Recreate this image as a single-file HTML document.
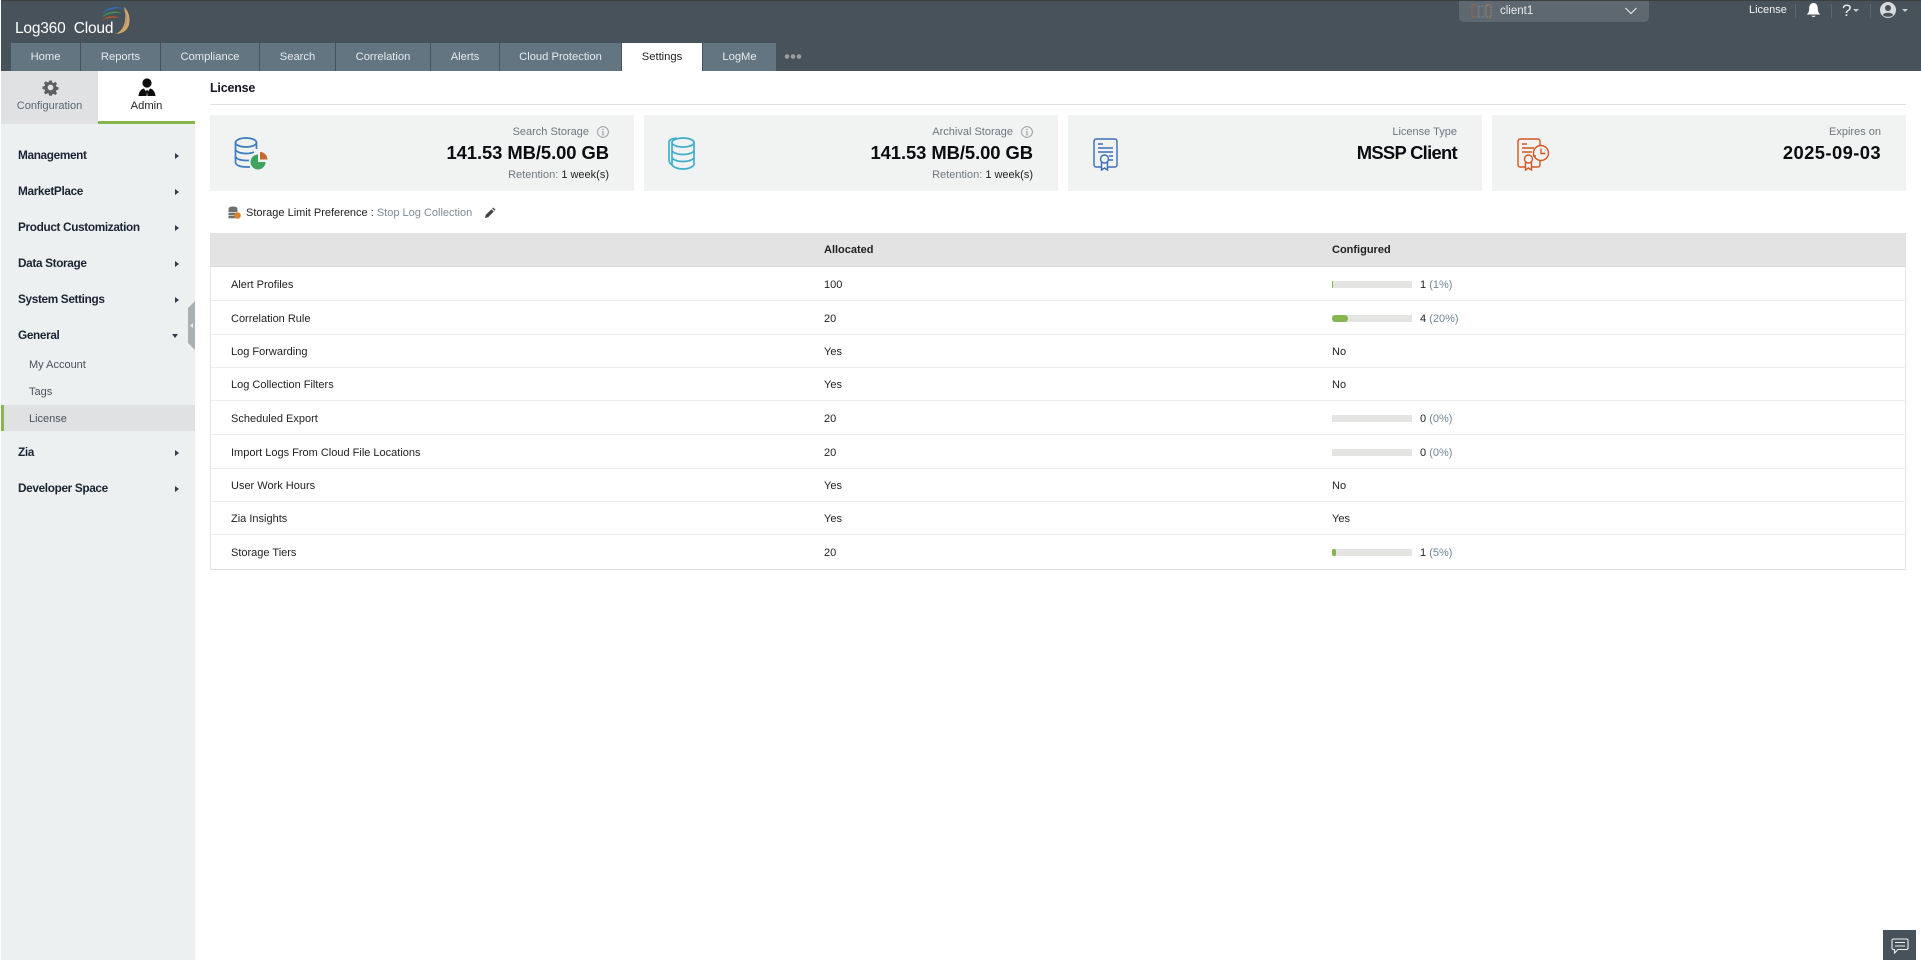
<!DOCTYPE html>
<html><head><meta charset="utf-8"><title>License</title>
<style>
*{box-sizing:border-box}
html,body{margin:0;padding:0;width:1921px;height:960px;overflow:hidden;background:#fff;font-family:"Liberation Sans",sans-serif;font-size:11px;color:#222}
.a{position:absolute;white-space:nowrap;line-height:14px}
#hd{position:absolute;left:0;top:0;width:1921px;height:71px;background:#47525a;border-top:1px solid #3a3f42}
.tab{position:absolute;top:43px;height:28px;background:#647582;color:#e6ebee;text-align:center;line-height:28px;font-size:11.2px}
.tab.on{background:#fff;color:#222}
.mt{position:absolute;left:18px;font-weight:bold;font-size:11.8px;letter-spacing:-.35px;color:#1b2433;line-height:14px;white-space:nowrap}
.ar{position:absolute;left:175px;width:0;height:0;border-left:4px solid #3b3650;border-top:3.5px solid transparent;border-bottom:3.5px solid transparent}
.st{position:absolute;left:29px;color:#4a5258;line-height:14px;font-size:11px}
.card{position:absolute;top:115px;height:76px;background:#f1f3f3}
.lb{position:absolute;right:25px;color:#6f777c;font-size:11px;line-height:14px;white-space:nowrap}
.v{position:absolute;right:25px;top:27px;font-weight:bold;font-size:18.4px;color:#0b0b10;line-height:22px;white-space:nowrap}
.ret{position:absolute;right:25px;top:53px;color:#6f777c;font-size:11px;line-height:14px;white-space:nowrap}
.ret b{font-weight:normal;color:#222}
.row{position:absolute;left:210px;width:1696px;border-bottom:1px solid #eceded;border-left:1px solid #e6e6e6;border-right:1px solid #e6e6e6}
.c{position:absolute;line-height:14px;white-space:nowrap;color:#222}
.bar{position:absolute;left:1332px;width:80px;height:7px;background:#e4e5e3}
.bar i{display:block;height:7px;background:#84b84f}
.cnt{position:absolute;left:1420px;line-height:14px;white-space:nowrap;color:#222}
.cnt span{color:#6e8796}
</style></head><body>
<div style="position:absolute;left:0;top:0;width:1px;height:960px;background:#fff;z-index:9"></div>
<div id="hd"></div>
<div class="a" style="left:15px;top:19px;color:#fff;font-size:15.5px;line-height:20px;letter-spacing:-.2px;z-index:2">Log360&nbsp; Cloud</div>
<svg style="position:absolute;left:98px;top:5px;z-index:2" width="34" height="32" viewBox="0 0 34 32" fill="none">
<path d="M4 9C9 1 22 0 27 5C22 2 12 3 4 9Z" fill="#2c6fb7"/>
<path d="M4 12C9 6 19 5 24 9C19 7 11 8 4 12Z" fill="#3a9c54"/>
<path d="M4 15C9 11 16 10 21 13C16 12 10 13 4 15Z" fill="#b8562c"/>
<path d="M26 2C33 8 33 20 28 25C25 28 20 29 17 29C24 27 30 18 26 2Z" fill="#d6a667"/>
<path d="M24 3C30 9 30 18 26 23C30 17 29 9 24 3Z" fill="#2c6fb7"/>
</svg>
<div class="tab" style="left:11px;width:69px">Home</div>
<div class="tab" style="left:81px;width:79px">Reports</div>
<div class="tab" style="left:161px;width:98px">Compliance</div>
<div class="tab" style="left:260px;width:75px">Search</div>
<div class="tab" style="left:336px;width:94px">Correlation</div>
<div class="tab" style="left:431px;width:68px">Alerts</div>
<div class="tab" style="left:500px;width:121px">Cloud Protection</div>
<div class="tab on" style="left:622px;width:80px">Settings</div>
<div class="tab" style="left:703px;width:73px">LogMe</div>
<svg style="position:absolute;left:784px;top:53px" width="18" height="7"><circle cx="3" cy="3.500" r="2.300" fill="#9a9ea1"/><circle cx="9" cy="3.500" r="2.300" fill="#9a9ea1"/><circle cx="15" cy="3.500" r="2.300" fill="#9a9ea1"/></svg>

<div style="position:absolute;left:1459px;top:1px;width:190px;height:21px;background:#5e6871;border-radius:0 0 5px 5px"></div>
<svg style="position:absolute;left:1471px;top:4px" width="22" height="18" fill="none"><rect x="1" y="1" width="6" height="12" rx="1" stroke="#b0683a" stroke-dasharray="1.500 1"/><rect x="8" y="2" width="5" height="11" stroke="#5c8aa8" stroke-dasharray="1.500 1"/><rect x="15" y="1" width="5" height="12" rx="1" stroke="#b98a50" stroke-dasharray="1.500 1"/></svg>
<div class="a" style="left:1500px;top:4px;color:#e8ecef;font-size:11.5px">client1</div>
<svg style="position:absolute;left:1624px;top:6px" width="14" height="10" fill="none"><path d="M1.500 2L7 7.500L12.500 2" stroke="#eef0f2" stroke-width="1.100"/></svg>
<div class="a" style="left:1749px;top:3px;color:#f2f4f5;font-size:11px">License</div>
<div style="position:absolute;left:1795px;top:4px;width:1px;height:14px;background:#5b666e"></div>
<div style="position:absolute;left:1831px;top:4px;width:1px;height:14px;background:#5b666e"></div>
<div style="position:absolute;left:1870px;top:4px;width:1px;height:14px;background:#5b666e"></div>
<svg style="position:absolute;left:1806px;top:2px" width="15" height="16"><path d="M7.500 1C4.500 1 3.200 3.500 3.200 6.500C3.200 9.500 2.400 11 .8 12.500H14.200C12.600 11 11.800 9.500 11.800 6.500C11.800 3.500 10.500 1 7.500 1Z" fill="#fff"/><path d="M5.500 13.700H9.500C9.200 15.300 5.800 15.300 5.500 13.700Z" fill="#fff"/></svg>
<div class="a" style="left:1842px;top:2px;color:#eef0f2;font-size:17px;line-height:18px">?</div>
<div style="position:absolute;left:1853px;top:9px;border-top:3px solid #c9cdd0;border-left:3.500px solid transparent;border-right:3.500px solid transparent"></div>
<svg style="position:absolute;left:1880px;top:2px" width="16" height="16"><circle cx="8" cy="8" r="8" fill="#d8dbdd"/><circle cx="8" cy="6" r="3" fill="#47525a"/><path d="M2.800 13C4 10 12 10 13.200 13C10.500 15.500 5.500 15.500 2.800 13Z" fill="#47525a"/></svg>
<div style="position:absolute;left:1902px;top:9px;border-top:3px solid #c9cdd0;border-left:3.500px solid transparent;border-right:3.500px solid transparent"></div>

<!-- sidebar -->
<div style="position:absolute;left:1px;top:71px;width:194px;height:889px;background:#ecf0f1"></div>
<div style="position:absolute;left:1px;top:71px;width:97px;height:53px;background:#e0e1e3"></div>
<div style="position:absolute;left:98px;top:71px;width:97px;height:50px;background:#fff"></div>
<div style="position:absolute;left:98px;top:121px;width:97px;height:3px;background:#84b84f"></div>
<svg style="position:absolute;left:42px;top:79px" width="17" height="17" viewBox="0 0 24 24"><path fill="#5d6063" d="M10 1h4l.7 3.200 2 .8 2.800-1.800 2.800 2.800L20.500 8.800l.8 2 3.200.7v4l-3.200.7-.8 2 1.800 2.800-2.800 2.800-2.800-1.800-2 .8L14 25h-4l-.7-3.200-2-.8-2.800 1.800-2.800-2.800L3.500 17.200l-.8-2L-.5 14.500v-4l3.200-.7.800-2L1.700 5 4.500 2.200 7.300 4l2-.8z" transform="translate(1.200 1.200) scale(.9)"/><circle cx="12" cy="12" r="4" fill="#e0e1e3"/></svg>
<div class="a" style="left:1px;width:97px;text-align:center;top:99px;color:#5b6770;font-size:11px">Configuration</div>
<svg style="position:absolute;left:138px;top:78px" width="18" height="19" viewBox="0 0 18 19"><circle cx="9" cy="5" r="4.600" fill="#0c0c0c"/><path d="M0.500 18C1 13 3.500 11 6 10.500L8 13.500L8.500 12H9.500L10 13.500L12 10.500C14.500 11 17 13 17.500 18H9.500L9 14L8.500 18Z" fill="#0c0c0c"/></svg>
<div class="a" style="left:98px;width:97px;text-align:center;top:99px;color:#222;font-size:11.2px">Admin</div>

<div class="mt" style="top:148px">Management</div><div class="ar" style="top:153px"></div>
<div class="mt" style="top:184px">MarketPlace</div><div class="ar" style="top:189px"></div>
<div class="mt" style="top:220px">Product Customization</div><div class="ar" style="top:225px"></div>
<div class="mt" style="top:256px">Data Storage</div><div class="ar" style="top:261px"></div>
<div class="mt" style="top:292px">System Settings</div><div class="ar" style="top:297px"></div>
<div class="mt" style="top:328px">General</div>
<div style="position:absolute;left:172px;top:334px;border-top:4px solid #3b3650;border-left:3.500px solid transparent;border-right:3.500px solid transparent"></div>
<div class="st" style="top:358px">My Account</div>
<div class="st" style="top:385px">Tags</div>
<div style="position:absolute;left:1px;top:405px;width:194px;height:26px;background:#e0e1e3;border-left:3px solid #84b84f"></div>
<div class="st" style="top:412px">License</div>
<div class="mt" style="top:445px">Zia</div><div class="ar" style="top:450px"></div>
<div class="mt" style="top:481px">Developer Space</div><div class="ar" style="top:486px"></div>
<svg style="position:absolute;left:188px;top:301px" width="7" height="49"><path d="M7 0V49L0 42V7Z" fill="#a9b0b3"/><path d="M2 24.500L5 22V27Z" fill="#eceff0"/></svg>

<!-- content -->
<div class="a" style="left:210px;top:81px;font-weight:bold;font-size:12.5px;letter-spacing:-.2px;color:#14171c">License</div>
<div style="position:absolute;left:210px;top:104px;width:1696px;height:1px;background:#dfe1e2"></div>

<div class="card" style="left:210px;width:424px">
<svg style="position:absolute;left:24px;top:22px" width="36" height="34" viewBox="0 0 36 34" fill="none" stroke="#3b7cc0" stroke-width="1.700"><ellipse cx="12" cy="5.500" rx="10.500" ry="4.500"/><path d="M1.500 5.500V25.500C1.500 28 6 30 12 30H16M22.500 5.500V12M1.500 12C1.500 14.500 6 16.500 12 16.500C15 16.500 18 16 20 15M1.500 19C1.500 21.500 6 23.500 12 23.500H15"/><path d="M25 16.500A7.500 7.500 0 1 0 32.500 24H25Z" fill="#3da35d" stroke="none" transform="translate(-1 1)"/><path d="M26 15A7.500 7.500 0 0 1 33.500 22.500H26Z" fill="#c8692f" stroke="none"/></svg>
<div class="lb" style="right:45px;top:10px">Search Storage</div>
<svg style="position:absolute;right:25px;top:11px" width="12" height="12" fill="none"><circle cx="6" cy="6" r="5.400" stroke="#9a9fa3"/><path d="M6 5V9.500M6 2.800V4" stroke="#9a9fa3" stroke-width="1.200"/></svg>
<div class="v" style="letter-spacing:-.06px">141.53 MB/5.00 GB</div>
<div class="ret">Retention: <b>1 week(s)</b></div>
</div>
<div class="card" style="left:644px;width:414px">
<svg style="position:absolute;left:24px;top:21px" width="30" height="36" viewBox="0 0 30 36" fill="none" stroke="#40aecb" stroke-width="1.700"><ellipse cx="15" cy="6.500" rx="11" ry="4.500"/><path d="M4 6.500V28C4 30.500 9 33 15 33C21 33 26 30.500 26 28V6.500M4 14C4 16.500 9 18.500 15 18.500C21 18.500 26 16.500 26 14M4 21C4 23.500 9 25.500 15 25.500C21 25.500 26 23.500 26 21"/><path d="M9 2.200C4 2.500 1 4 1 6V24C1 27 3 28.500 5 29.500"/></svg>
<div class="lb" style="right:45px;top:10px">Archival Storage</div>
<svg style="position:absolute;right:25px;top:11px" width="12" height="12" fill="none"><circle cx="6" cy="6" r="5.400" stroke="#9a9fa3"/><path d="M6 5V9.500M6 2.800V4" stroke="#9a9fa3" stroke-width="1.200"/></svg>
<div class="v" style="letter-spacing:-.06px">141.53 MB/5.00 GB</div>
<div class="ret">Retention: <b>1 week(s)</b></div>
</div>
<div class="card" style="left:1068px;width:414px">
<svg style="position:absolute;left:25px;top:23px" width="25" height="33" viewBox="0 0 25 33" fill="none" stroke="#3a6cb5" stroke-width="1.400"><path d="M8 29H3C2 29 1 28 1 27V3C1 2 2 1 3 1H22C23 1 24 2 24 3V27C24 28 23 29 22 29H15"/><path d="M5 6H10M5 10H20M5 14H20M16 18H20M16 22H20"/><circle cx="11.500" cy="21" r="4"/><path d="M8.500 24V32L11.500 30L14.500 32V24"/></svg>
<div class="lb" style="top:10px">License Type</div>
<div class="v" style="letter-spacing:-.7px">MSSP Client</div>
</div>
<div class="card" style="left:1492px;width:414px">
<svg style="position:absolute;left:25px;top:23px" width="33" height="33" viewBox="0 0 33 33" fill="none" stroke="#d4561f" stroke-width="1.400"><path d="M8 29H3C2 29 1 28 1 27V3C1 2 2 1 3 1H21C22 1 23 2 23 3V7M23 23V27C23 28 22 29 21 29H15"/><path d="M5 6H10M5 10H17M5 14H15M16 18H19"/><circle cx="11.500" cy="21" r="4"/><path d="M8.500 24V32L11.500 30L14.500 32V24"/><circle cx="24" cy="15" r="7.500"/><path d="M24 10.500V15.500H28.500"/></svg>
<div class="lb" style="top:10px">Expires on</div>
<div class="v" style="letter-spacing:.4px">2025-09-03</div>
</div>

<svg style="position:absolute;left:228px;top:206px" width="13" height="13" viewBox="0 0 13 13"><ellipse cx="5" cy="2.500" rx="4.500" ry="2" fill="#6d6f71"/><rect x=".5" y="3.500" width="9" height="2.500" fill="#6d6f71"/><rect x=".5" y="6.700" width="9" height="2.500" fill="#6d6f71"/><rect x=".5" y="9.800" width="7" height="2.500" fill="#6d6f71"/><circle cx="9.500" cy="9.500" r="3.300" fill="#d9822b"/></svg>
<div class="a" style="left:246px;top:206px;color:#222;font-size:11px">Storage Limit Preference : <span style="color:#7d8c97">Stop Log Collection</span></div>
<svg style="position:absolute;left:484px;top:207px" width="12" height="12" viewBox="0 0 12 12"><path d="M1 11L1.800 7.800L7.500 2.200L9.800 4.500L4.200 10.200Z" fill="#444"/><path d="M8.300 1.500L9.300.5L11.500 2.700L10.500 3.700Z" fill="#444"/></svg>

<div style="position:absolute;left:210px;top:233px;width:1696px;height:34px;background:#e3e3e3;border-bottom:1px solid #d8d8d8"></div>
<div class="c" style="left:824px;top:243px;font-weight:bold">Allocated</div>
<div class="c" style="left:1332px;top:243px;font-weight:bold">Configured</div>

<div class="row" style="top:267px;height:34px"></div>
<div class="row" style="top:301px;height:34px"></div>
<div class="row" style="top:335px;height:33px"></div>
<div class="row" style="top:368px;height:33px"></div>
<div class="row" style="top:401px;height:34px"></div>
<div class="row" style="top:435px;height:34px"></div>
<div class="row" style="top:469px;height:33px"></div>
<div class="row" style="top:502px;height:33px"></div>
<div class="row" style="top:535px;height:35px;border-bottom-color:#dcdcdc"></div>

<div class="c" style="left:231px;top:278px">Alert Profiles</div><div class="c" style="left:824px;top:278px">100</div>
<div class="bar" style="top:281px"><i style="width:1px"></i></div><div class="cnt" style="top:278px">1 <span>(1%)</span></div>
<div class="c" style="left:231px;top:312px">Correlation Rule</div><div class="c" style="left:824px;top:312px">20</div>
<div class="bar" style="top:315px"><i style="width:16px;border-radius:4px"></i></div><div class="cnt" style="top:312px">4 <span>(20%)</span></div>
<div class="c" style="left:231px;top:345px">Log Forwarding</div><div class="c" style="left:824px;top:345px">Yes</div><div class="c" style="left:1332px;top:345px">No</div>
<div class="c" style="left:231px;top:378px">Log Collection Filters</div><div class="c" style="left:824px;top:378px">Yes</div><div class="c" style="left:1332px;top:378px">No</div>
<div class="c" style="left:231px;top:412px">Scheduled Export</div><div class="c" style="left:824px;top:412px">20</div>
<div class="bar" style="top:415px"></div><div class="cnt" style="top:412px">0 <span>(0%)</span></div>
<div class="c" style="left:231px;top:446px">Import Logs From Cloud File Locations</div><div class="c" style="left:824px;top:446px">20</div>
<div class="bar" style="top:449px"></div><div class="cnt" style="top:446px">0 <span>(0%)</span></div>
<div class="c" style="left:231px;top:479px">User Work Hours</div><div class="c" style="left:824px;top:479px">Yes</div><div class="c" style="left:1332px;top:479px">No</div>
<div class="c" style="left:231px;top:512px">Zia Insights</div><div class="c" style="left:824px;top:512px">Yes</div><div class="c" style="left:1332px;top:512px">Yes</div>
<div class="c" style="left:231px;top:546px">Storage Tiers</div><div class="c" style="left:824px;top:546px">20</div>
<div class="bar" style="top:549px"><i style="width:4px;border-radius:2px"></i></div><div class="cnt" style="top:546px">1 <span>(5%)</span></div>

<div style="position:absolute;left:1883px;top:930px;width:33px;height:30px;background:#47525a"></div>
<svg style="position:absolute;left:1891px;top:938px" width="18" height="17" viewBox="0 0 18 17" fill="none" stroke="#eef0f1" stroke-width="1.100"><path d="M2.500 1H15.500C16.500 1 17 1.500 17 2.500V10C17 11 16.500 11.500 15.500 11.500H7L3.500 15V11.500H2.500C1.500 11.500 1 11 1 10V2.500C1 1.500 1.500 1 2.500 1Z"/><path d="M4 4.500H14M4 8H14"/></svg>
</body></html>
